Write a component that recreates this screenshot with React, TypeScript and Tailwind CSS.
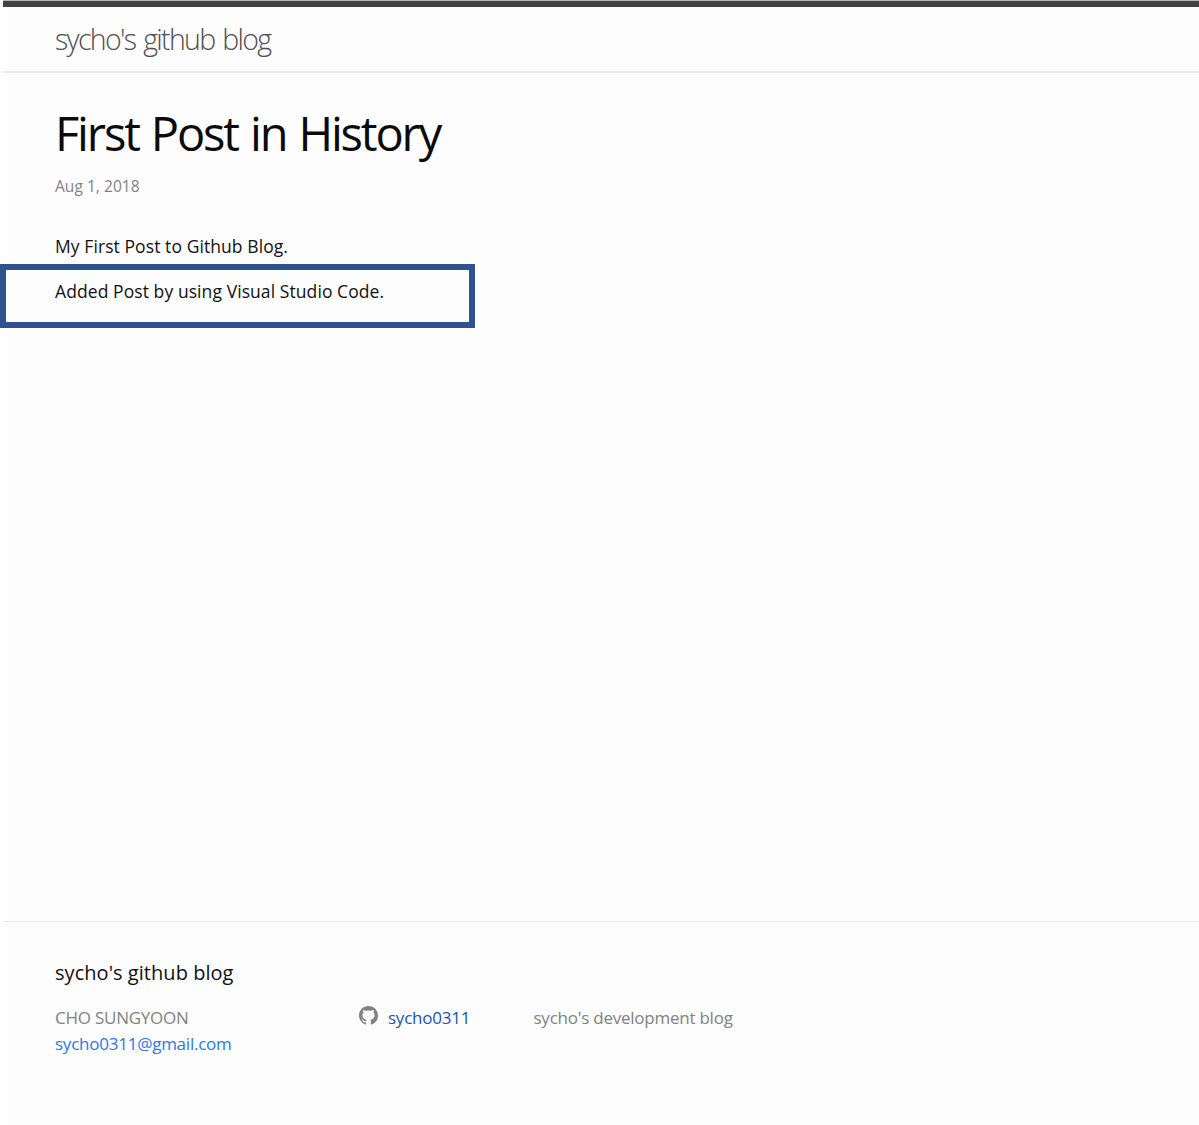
const GITHUB_MARK =
  'M8 0C3.58 0 0 3.58 0 8c0 3.54 2.29 6.53 5.47 7.59.4.07.55-.17.55-.38 0-.19-.01-.82-.01-1.49-2.01.37-2.53-.49-2.69-.94-.09-.23-.48-.94-.82-1.13-.28-.15-.68-.52-.01-.53.63-.01 1.08.58 1.23.82.72 1.21 1.87.87 2.33.66.07-.52.28-.87.51-1.07-1.78-.2-3.64-.89-3.64-3.95 0-.87.31-1.59.82-2.15-.08-.2-.36-1.02.08-2.12 0 0 .67-.21 2.2.82.64-.18 1.32-.27 2-.27s1.36.09 2 .27c1.53-1.04 2.2-.82 2.2-.82.44 1.1.16 1.92.08 2.12.51.56.82 1.27.82 2.15 0 3.07-1.87 3.75-3.65 3.95.29.25.54.73.54 1.48 0 1.07-.01 1.93-.01 2.2 0 .21.15.46.55.38A8.013 8.013 0 0 0 16 8c0-4.42-3.58-8-8-8z';

function Header() {
  return (
    <header className="h-[72px] border-b-2 border-[#ebebeb] border-t-6 border-t-[#424242] pl-[52px]">
      <a href="#" className="block w-fit whitespace-nowrap text-[28.5px] leading-[64px] font-light tracking-[-1.68px] [word-spacing:2px] text-[#505050]">
        sycho's github blog
      </a>
    </header>
  );
}

function Post() {
  return (
    <main className="h-[848px] pl-[52px] pt-[33px] text-[#111111]">
      <h1 className="w-fit whitespace-nowrap text-[47px] leading-[54px] tracking-[-2.15px] [word-spacing:2px] text-[#0b0b0b]">
        First Post in History
      </h1>
      <p className="mt-[13px] w-fit whitespace-nowrap text-[15.5px] leading-[26px] tracking-[0.05px] text-[#828282]">Aug 1, 2018</p>
      <div className="mt-[33px] text-[17.5px] leading-[28px] tracking-[0.08px]">
        <p className="w-fit whitespace-nowrap">My First Post to Github Blog.</p>
        <div className="relative mt-[17px]">
          <div className="absolute -left-[55px] -top-[13px] h-[64px] w-[475px] border-6 border-[#2f528f]" />
          <p className="w-fit whitespace-nowrap">Added Post by using Visual Studio Code.</p>
        </div>
      </div>
    </main>
  );
}

function Footer() {
  return (
    <footer className="h-[204px] border-t border-[#e8e8e8] pl-[52px] pt-[36px]">
      <h2 className="w-fit whitespace-nowrap text-[20px] leading-[30px] tracking-[0.04px] text-[#111111]">sycho's github blog</h2>
      <div className="mt-[17px] flex whitespace-nowrap text-[17px] leading-[26px] tracking-[-0.24px] text-[#828282]">
        <div className="w-[304px]">
          <p className="w-fit">CHO SUNGYOON</p>
          <a href="#" className="block w-fit text-[#2a7ae2]">sycho0311@gmail.com</a>
        </div>
        <a href="#" className="flex h-[26px] w-[174.5px] items-start text-[#1756a9]">
          <svg viewBox="0 0 16 16" className="mt-[1px] mr-[10px] h-[19px] w-[19px] shrink-0 fill-[#828282]">
            <path fillRule="evenodd" d={GITHUB_MARK} />
          </svg>
          <span>sycho0311</span>
        </a>
        <p className="w-fit">sycho's development blog</p>
      </div>
    </footer>
  );
}

export default function App() {
  return (
    <div className="h-[1125px] overflow-hidden bg-white pl-[3px] font-['Open_Sans','Noto_Sans',sans-serif]">
      <div className="h-px bg-[#b5b8b5]" />
      <div className="h-[1124px] bg-[#fdfdfd]">
        <Header />
        <Post />
        <Footer />
      </div>
    </div>
  );
}
